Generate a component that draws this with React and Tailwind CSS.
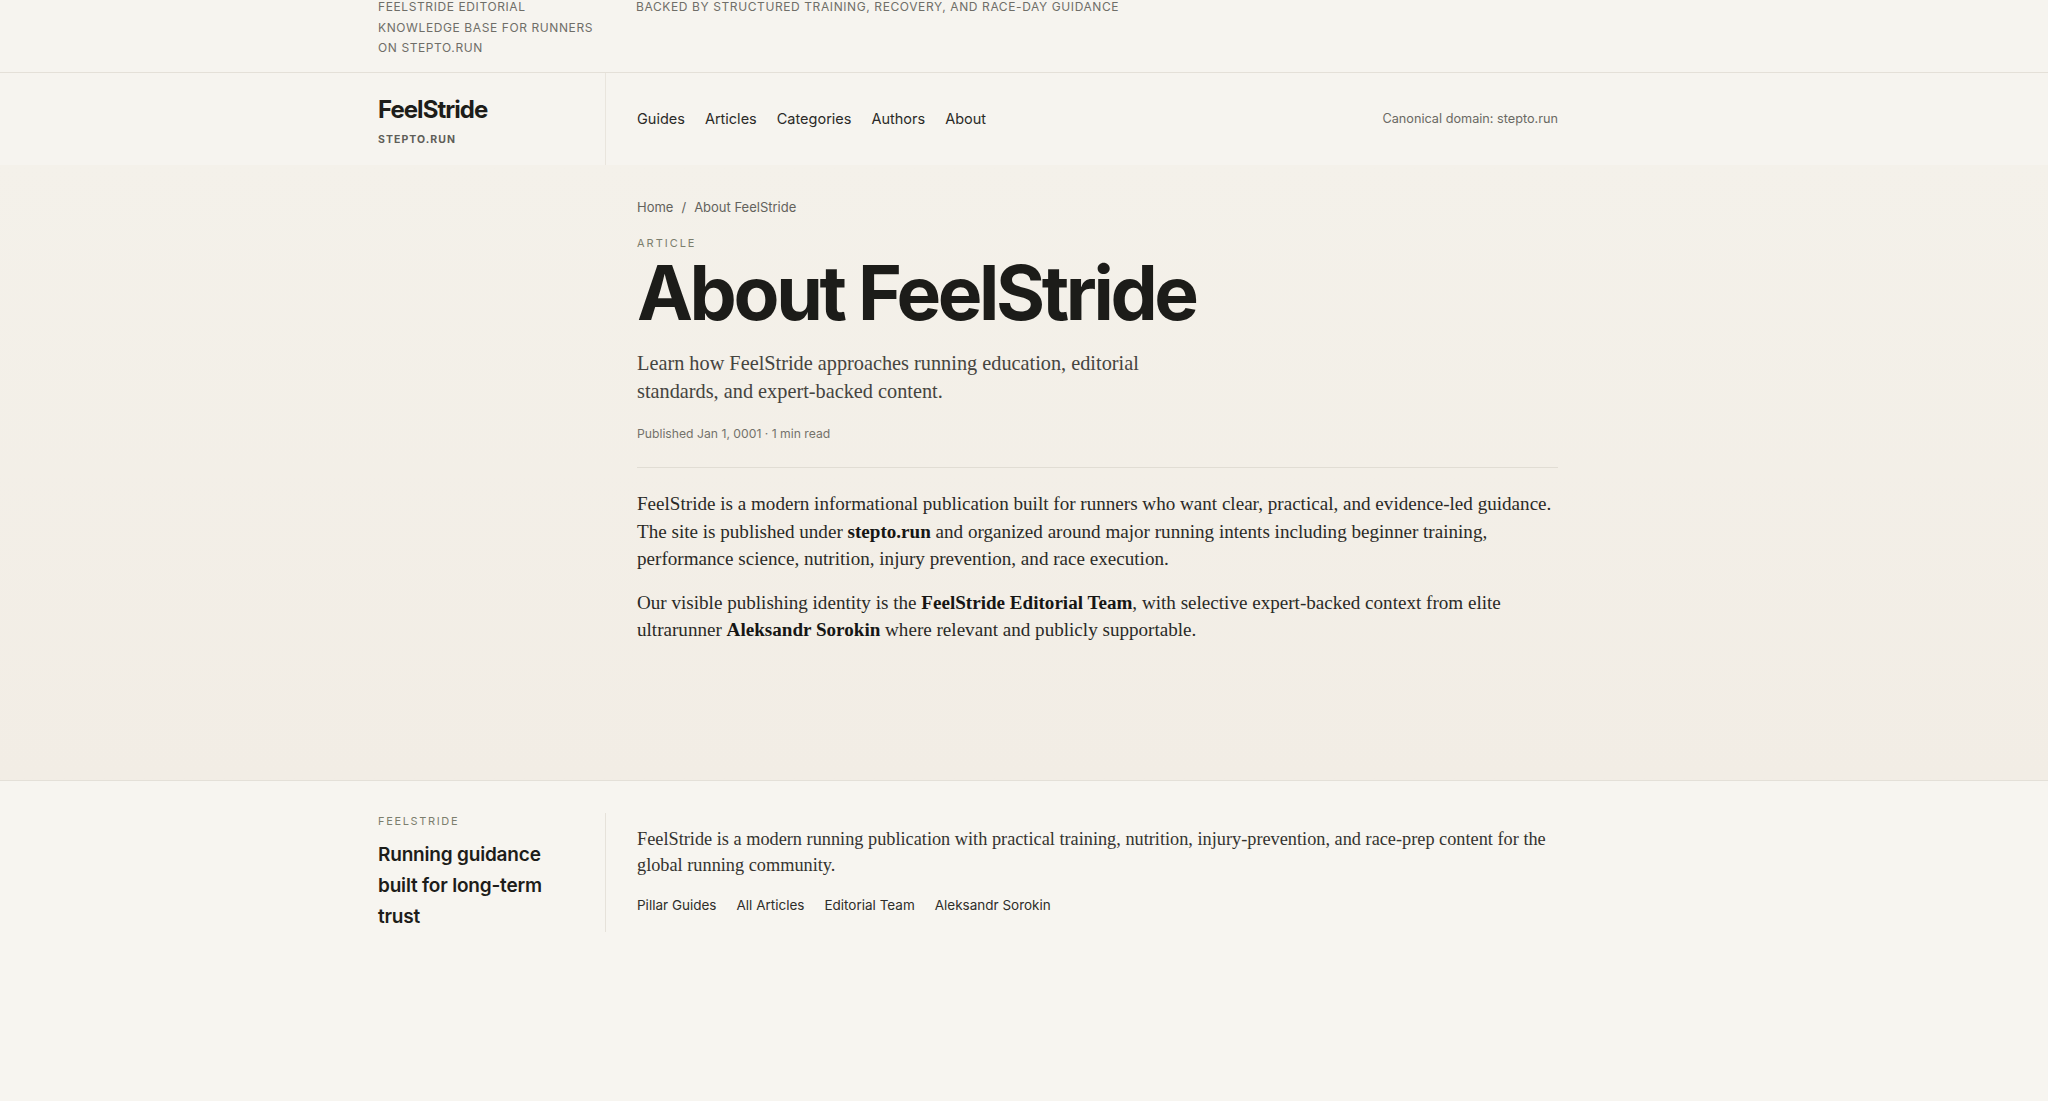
export default function App() {
  const sans = { fontFamily: 'Inter, "Liberation Sans", sans-serif' }
  return (
    <div className="min-h-screen flex flex-col bg-[#f7f5f0] text-[#1f1f1c] font-['Inter','Liberation_Sans',sans-serif]">
      {/* Top strip */}
      <div className="bg-[#f6f4ef] border-b border-[#e4e0d8] h-[73px] overflow-hidden">
        <div className="pl-[378px] flex -mt-[3px]">
          <div className="w-[227px] pr-[8px] text-[12px] leading-[20.5px] uppercase tracking-[0.05em] text-[#6f6e68]">
            FeelStride editorial knowledge base for runners on stepto.run
          </div>
          <div className="pl-[31px] text-[12px] leading-[20.5px] uppercase tracking-[0.05em] text-[#6f6e68]">
            Backed by structured training, recovery, and race-day guidance
          </div>
        </div>
      </div>

      {/* Header */}
      <header className="bg-[#f6f4ef]">
        <div className="pl-[378px] flex">
          <div className="w-[228px] border-r border-[#e9e5dd] pt-[22px] pb-[18px]">
            <div className="text-[24px] leading-[30px] font-bold tracking-[-0.04em] text-[#1d1d1a]">FeelStride</div>
            <div className="mt-[8px] text-[10.5px] leading-[14px] font-bold tracking-[0.1em] text-[#5f5e58]">STEPTO.RUN</div>
          </div>
          <div className="w-[952px] pl-[31px] flex items-center justify-between">
            <nav className="flex items-center gap-[20px] text-[14.5px] text-[#2a2a27]">
              <a>Guides</a>
              <a>Articles</a>
              <a>Categories</a>
              <a>Authors</a>
              <a>About</a>
            </nav>
            <div className="text-[12.7px] text-[#6a6963]">Canonical domain: stepto.run</div>
          </div>
        </div>
      </header>

      {/* Main */}
      <main className="bg-gradient-to-b from-[#f4f1ea] to-[#f2ede5] border-b border-[#e4e0d8] pb-[136px]">
        <div className="pl-[378px] flex">
          <div className="w-[228px]" />
          <article className="w-[952px] pl-[31px] pt-[32px]">
            <div className="flex items-center gap-[8px] text-[13px] leading-[20px] text-[#63625c]">
              <span>Home</span>
              <span>/</span>
              <span>About FeelStride</span>
            </div>
            <div className="mt-[18px] text-[11px] leading-[16px] tracking-[0.18em] uppercase text-[#7c7e6d]">Article</div>
            <h1 className="mt-[4px] text-[75px] leading-[75px] font-bold tracking-[-0.045em] text-[#1c1c19]">About FeelStride</h1>
            <p className="mt-[19px] max-w-[560px] font-['Liberation_Serif',serif] text-[20.3px] leading-[28px] text-[#45443f]">
              Learn how FeelStride approaches running education, editorial standards, and expert-backed content.
            </p>
            <div className="mt-[19px] text-[12.2px] leading-[20px] text-[#73726b]">Published Jan 1, 0001 · 1 min read</div>
            <div className="mt-[23px] border-t border-[#e1ddd4] pt-[22px] font-['Liberation_Serif',serif] text-[19.1px] leading-[27.5px] text-[#2a2a26]">
              <p>
                FeelStride is a modern informational publication built for runners who want clear, practical, and evidence-led guidance.
                The site is published under <strong className="text-[#161614]">stepto.run</strong> and organized around major running intents including beginner training,
                performance science, nutrition, injury prevention, and race execution.
              </p>
              <p className="mt-[16px]">
                Our visible publishing identity is the <strong className="text-[#161614]">FeelStride Editorial Team</strong>, with selective expert-backed context from elite
                ultrarunner <strong className="text-[#161614]">Aleksandr Sorokin</strong> where relevant and publicly supportable.
              </p>
            </div>
          </article>
        </div>
      </main>

      {/* Footer */}
      <footer className="flex-1 bg-[#f7f5f0] pt-[32px] pb-[160px]" style={sans}>
        <div className="pl-[378px] flex">
          <div className="w-[228px] border-r border-[#e6e2da] pr-[28px]">
            <div className="text-[11px] leading-[16px] tracking-[0.15em] uppercase text-[#7c7e6d]">FeelStride</div>
            <div className="mt-[10px] text-[19px] leading-[31px] font-semibold tracking-[-0.01em] text-[#1d1d1a]">
              Running guidance built for long-term trust
            </div>
          </div>
          <div className="w-[952px] pl-[31px] pt-[13px]">
            <p className="font-['Liberation_Serif',serif] text-[18.3px] leading-[26px] text-[#34332f]">
              FeelStride is a modern running publication with practical training, nutrition, injury-prevention, and race-prep content for the global running community.
            </p>
            <div className="mt-[17px] flex gap-[20px] text-[13.5px] leading-[20px] text-[#2e2e2a]">
              <a>Pillar Guides</a>
              <a>All Articles</a>
              <a>Editorial Team</a>
              <a>Aleksandr Sorokin</a>
            </div>
          </div>
        </div>
      </footer>
    </div>
  )
}
